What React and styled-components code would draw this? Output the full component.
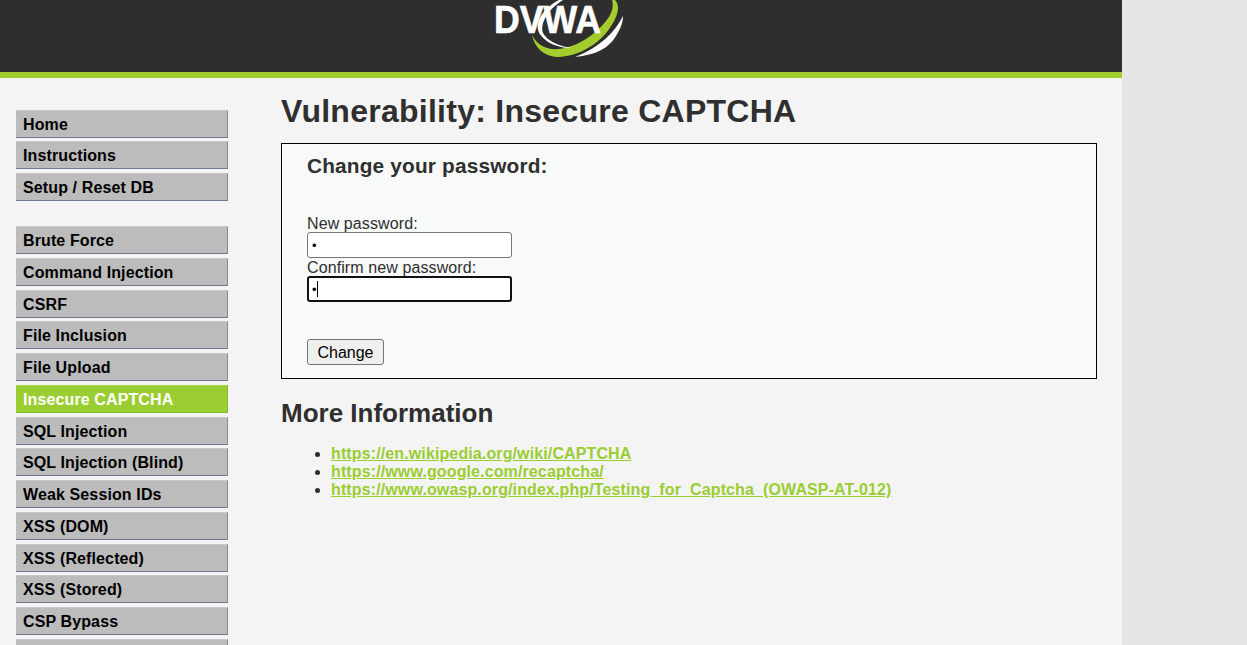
import React from "react";
import styled, { createGlobalStyle } from "styled-components";

const Global = createGlobalStyle`
  html, body { margin: 0; padding: 0; background: #e5e5e5; height: 100%; overflow: hidden; }
  body { font-family: "Liberation Sans", Arial, sans-serif; font-size: 16px; color: #2f2f2f; }
`;
const Container = styled.div`
  width: 1122px;
  height: 645px;
  background: #f4f4f4;
  overflow: hidden;
`;
const Header = styled.header`
  height: 72px;
  background: #2e2e2e;
  border-bottom: 6px solid #a3cc2e;
  display: flex;
  justify-content: center;
  overflow: hidden;
`;
const LogoSvg = styled.svg`
  width: 140px;
  height: 72px;
  display: block;
`;
const Columns = styled.div`
  display: flex;
  align-items: flex-start;
`;
const Side = styled.nav`
  width: 212px;
  margin: 31.7px 0 0 16px;
  flex: none;
`;
const Group = styled.ul`
  list-style: none;
  margin: 0 0 24.9px;
  padding: 0;
`;
const Item = styled.li`
  box-sizing: border-box;
  height: 28px;
  margin-bottom: 3.75px;
  padding-left: 7px;
  background: ${p => (p.$active ? "#9acd32" : "#bcbcbc")};
  border-top: 1px solid ${p => (p.$active ? "#a9d64a" : "#c8c8c8")};
  border-bottom: 1px solid ${p => (p.$active ? "#8ab82c" : "#6d7a8c")};
  border-right: 1px solid ${p => (p.$active ? "#8ab82c" : "#8a8a8a")};
  color: ${p => (p.$active ? "#fff" : "#000")};
  font-weight: 700;
  font-size: 16px;
  line-height: 28px;
  letter-spacing: 0.12px;
  white-space: nowrap;
`;
const Main = styled.main`
  margin: 0 0 0 53px;
  width: 816px;
  flex: none;
`;
const Title = styled.h1`
  margin: 15px 0 0;
  height: 38px;
  font-size: 32px;
  line-height: 37px;
  font-weight: 700;
  letter-spacing: 0.26px;
  color: #2f2f2f;
`;
const Box = styled.section`
  box-sizing: border-box;
  height: 236px;
  margin-top: 12px;
  padding: 10px 25px 0;
  background: #f8f9f9;
  border: 1px solid #000;
`;
const BoxTitle = styled.h3`
  margin: 0 0 36px;
  font-size: 20.8px;
  line-height: 24px;
  font-weight: 700;
  letter-spacing: 0.18px;
`;
const Label = styled.label`
  display: block;
  height: 18px;
  font-size: 16px;
  line-height: 20px;
  letter-spacing: 0.1px;
`;
const Field = styled.div`
  box-sizing: border-box;
  width: 205px;
  height: 26px;
  background: #fff;
  border: ${p => (p.$focus ? "2px solid #101010" : "1px solid #767676")};
  border-radius: 3px;
  display: flex;
  align-items: center;
  padding-left: ${p => (p.$focus ? "3px" : "4px")};
  margin-bottom: ${p => (p.$focus ? "37px" : "0")};
  color: #000;
  font-size: 13px;
`;
const Caret = styled.span`
  display: inline-block;
  width: 1px;
  height: 16px;
  background: #000;
`;
const Change = styled.div`
  box-sizing: border-box;
  width: 77px;
  height: 26px;
  background: #efefef;
  border: 1px solid #767676;
  border-radius: 3px;
  color: #000;
  font-size: 16px;
  line-height: 25px;
  text-align: center;
`;
const SubTitle = styled.h2`
  margin: 20px 0 0;
  font-size: 26px;
  line-height: 29px;
  font-weight: 700;
`;
const Links = styled.ul`
  margin: 16.8px 0 0;
  padding-left: 50px;
  line-height: 18.1px;
  font-size: 16px;
`;
const LinkA = styled.a`
  color: #9acd32;
  font-weight: 700;
  letter-spacing: 0.12px;
  text-decoration: underline;
`;

const top = ["Home", "Instructions", "Setup / Reset DB"];
const vulns = ["Brute Force", "Command Injection", "CSRF", "File Inclusion", "File Upload", "Insecure CAPTCHA", "SQL Injection", "SQL Injection (Blind)", "Weak Session IDs", "XSS (DOM)", "XSS (Reflected)", "XSS (Stored)", "CSP Bypass", ""];
const urls = ["https://en.wikipedia.org/wiki/CAPTCHA", "https://www.google.com/recaptcha/", "https://www.owasp.org/index.php/Testing_for_Captcha_(OWASP-AT-012)"];

function Logo() {
  return (
    <LogoSvg viewBox="0 0 140 72">
      <path d="M41 35 C44 50 56 57 68 57 C92 56 118 38 126 14 C128 8 127 3 124 0 L121 0 C123 6 121 14 115 21 C104 35 86 47 68 49 C55 50 46 45 41 35 Z" fill="#a3cc2e" />
      <path d="M68 0 C56 6 45 18 47 30 C50 40 64 48 80 48 C68 46 56 41 52 33 C49 24 56 10 72 0 Z" fill="#fff" />
      <path d="M84 57 C105 55 118 48 125 36 C130 28 132 22 132 16 C124 32 108 48 84 57 Z" fill="#fff" />
      <text x="3" y="33" fill="#fff" fontFamily="Liberation Sans" fontWeight="700" fontSize="39" textLength="107" lengthAdjust="spacingAndGlyphs" stroke="#fff" strokeWidth="0.6">DVWA</text>
    </LogoSvg>
  );
}

export default function App() {
  return (
    <Container>
      <Global />
      <Header><Logo /></Header>
      <Columns>
        <Side>
          <Group>{top.map(t => <Item key={t}>{t}</Item>)}</Group>
          <Group>{vulns.map(t => <Item key={t} $active={t === "Insecure CAPTCHA"}>{t}</Item>)}</Group>
        </Side>
        <Main>
          <Title>Vulnerability: Insecure CAPTCHA</Title>
          <Box>
            <BoxTitle>Change your password:</BoxTitle>
            <Label>New password:</Label>
            <Field>•</Field>
            <Label>Confirm new password:</Label>
            <Field $focus>•<Caret /></Field>
            <Change>Change</Change>
          </Box>
          <SubTitle>More Information</SubTitle>
          <Links>
            {urls.map(u => <li key={u}><LinkA href="#">{u}</LinkA></li>)}
          </Links>
        </Main>
      </Columns>
    </Container>
  );
}
